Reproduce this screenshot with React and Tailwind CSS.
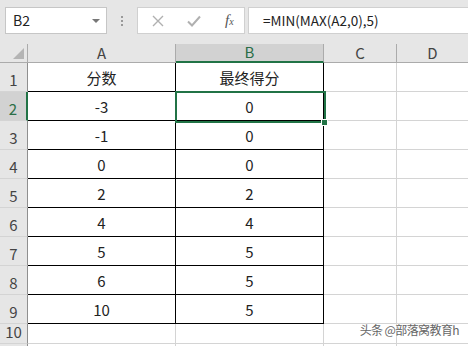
import React from "react";

const ROWS = [
  ["分数", "最终得分"],
  ["-3", "0"],
  ["-1", "0"],
  ["0", "0"],
  ["2", "2"],
  ["4", "4"],
  ["5", "5"],
  ["6", "5"],
  ["10", "5"],
];

const FONT = { fontFamily: '"Noto Sans CJK SC", "Noto Sans", sans-serif' };

function Toolbar() {
  return (
    <div className="h-[44px] bg-[#e6e6e6] flex items-start pt-[7px] pl-[5px]">
      {/* name box */}
      <div className="w-[102px] h-[27px] bg-white border border-[#c6c6c6] flex items-center justify-between pl-[7px] pr-[6px]">
        <span className="text-[14px] text-[#222]" style={FONT}>B2</span>
        <span className="w-0 h-0 border-l-[4px] border-r-[4px] border-t-[4px] border-l-transparent border-r-transparent border-t-[#777]" />
      </div>
      {/* dots */}
      <div className="w-[30px] h-[27px] flex flex-col items-center justify-center gap-[2px]">
        <span className="w-[2px] h-[2px] bg-[#999]" />
        <span className="w-[2px] h-[2px] bg-[#999]" />
        <span className="w-[2px] h-[2px] bg-[#999]" />
      </div>
      {/* buttons box */}
      <div className="w-[108px] h-[27px] bg-white border border-[#d0d0d0] flex items-center pl-[14px]">
        <svg width="12" height="12" viewBox="0 0 12 12">
          <path d="M1 1 L11 11 M11 1 L1 11" stroke="#b0b0b0" strokeWidth="1.4" fill="none" />
        </svg>
        <svg width="14" height="12" viewBox="0 0 14 12" className="ml-[23px]">
          <path d="M1 6.5 L5 10.5 L13 1.5" stroke="#b0b0b0" strokeWidth="2" fill="none" />
        </svg>
        <span className="ml-[24px] text-[15px] italic text-[#555]" style={{ fontFamily: '"Liberation Serif", serif' }}>
          f<span className="text-[10px]">x</span>
        </span>
      </div>
      <div className="w-[3px]" />
      {/* formula input */}
      <div className="flex-1 h-[27px] bg-white border border-[#d0d0d0] border-r-0 flex items-center pl-[14px]">
        <span className="text-[13.5px] text-[#222]" style={FONT}>=MIN(MAX(A2,0),5)</span>
      </div>
    </div>
  );
}

function ColumnHeader() {
  const colBase = "h-full flex items-center justify-center text-[15px] border-r border-[#ababab] border-b";
  return (
    <div className="h-[19px] flex bg-[#e6e6e6]" style={FONT}>
      <div className="w-[28px] h-full border-r border-b border-[#ababab] flex items-end justify-end pr-[3px] pb-[3px]">
        <span className="w-0 h-0 border-l-[11px] border-b-[11px] border-l-transparent border-b-[#b4b4b4]" />
      </div>
      <div className={`${colBase} w-[148px] text-[#444] border-b-[#ababab]`}>A</div>
      <div className={`${colBase} w-[148px] bg-[#d2d2d2] text-[#2b6e47] border-b-2 border-b-[#217346]`}>B</div>
      <div className={`${colBase} w-[73px] text-[#444] border-b-[#ababab]`}>C</div>
      <div className={`${colBase} flex-1 text-[#444] border-b-[#ababab] border-r-0`}>D</div>
    </div>
  );
}

function Row({ n, a, b, h = "h-[29px]", table = true }) {
  const sel = n === 2;
  const tb = table ? "border-black" : "border-[#d4d4d4]";
  return (
    <div className={`${h} flex`} style={FONT}>
      <div
        className={`w-[28px] h-full flex items-end justify-center pb-[1px] text-[15px] leading-[20px] border-b border-b-[#d4d4d4] border-r ${
          sel ? "bg-[#d2d2d2] text-[#2b6e47] border-r-2 border-r-[#217346]" : "bg-[#e6e6e6] text-[#444] border-r-[#8f8f8f]"
        }`}
      >
        {n}
      </div>
      <div className={`w-[148px] h-full flex items-end justify-center pb-[3px] text-[15px] leading-[20px] text-[#222] border-r border-b ${tb}`}>
        {a}
      </div>
      <div className={`w-[148px] h-full flex items-end justify-center pb-[3px] text-[15px] leading-[20px] text-[#222] border-r border-b ${tb}`}>
        {b}
      </div>
      <div className="w-[73px] h-full border-r border-b border-[#d4d4d4]" />
      <div className="flex-1 h-full border-b border-[#d4d4d4]" />
    </div>
  );
}

export default function App() {
  return (
    <div className="w-[468px] h-[346px] overflow-hidden bg-white relative">
      <Toolbar />
      <ColumnHeader />
      {ROWS.map((r, i) => (
        <Row key={i} n={i + 1} a={r[0]} b={r[1]} />
      ))}
      <Row n={10} a="" b="" h="h-[20px]" table={false} />
      <Row n="" a="" b="" h="h-[20px]" table={false} />

      {/* selection box on B2 */}
      <div className="absolute left-[175px] top-[91px] w-[151px] h-[32px] border-2 border-[#217346] pointer-events-none" />
      <div className="absolute left-[321px] top-[119px] w-[7px] h-[7px] bg-[#217346] border border-white" />

      {/* watermark */}
      <div
        className="absolute right-[9px] bottom-[7px] text-[12px] text-[#666] tracking-[-0.6px]"
        style={{ ...FONT, textShadow: "0 0 2px #fff, 0 0 2px #fff" }}
      >
        头条 @部落窝教育h
      </div>
    </div>
  );
}
